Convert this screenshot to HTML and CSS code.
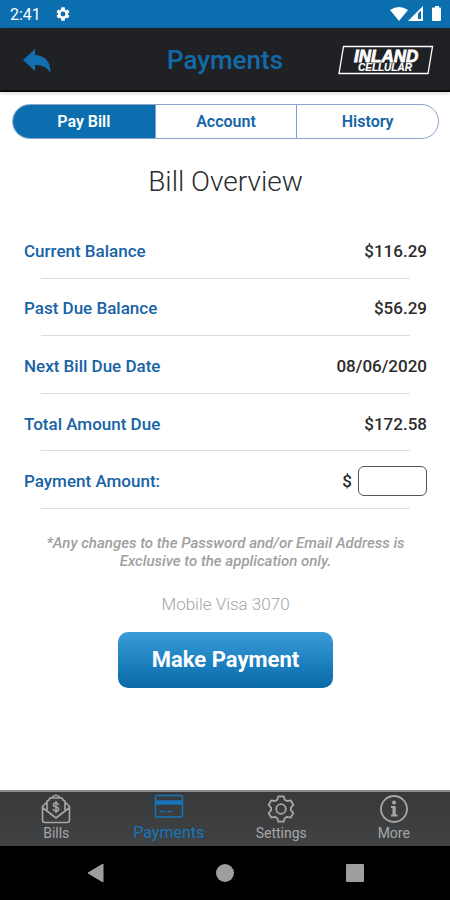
FILE: index.html
```html
<!DOCTYPE html>
<html lang="en">
<head>
<meta charset="utf-8">
<meta name="viewport" content="width=device-width, initial-scale=1">
<title>Payments</title>
<link rel="stylesheet" href="styles.css">
</head>
<body>
<div class="status">
  <div class="status-group">
    <span class="clock">2:41</span>
    <svg width="16" height="16" viewBox="0 0 24 24" fill="#fff" aria-hidden="true"><path fill-rule="evenodd" d="M19.4 13a7.600 7.600 0 0 0 0-2l2.300-1.700-2.300-4.100-2.700 1.100a8 8 0 0 0-1.700-1L14.600 2H9.400L9 5.300a8 8 0 0 0-1.700 1L4.600 5.200 2.300 9.300 4.600 11a7.600 7.600 0 0 0 0 2l-2.300 1.700 2.300 4.100 2.700-1.100a8 8 0 0 0 1.700 1l.4 3.300h5.200l.4-3.300a8 8 0 0 0 1.700-1l2.700 1.100 2.300-4.100zM12 15.600a3.600 3.600 0 1 1 0-7.200 3.600 3.600 0 0 1 0 7.200z"/></svg>
  </div>
  <svg width="52" height="18" viewBox="0 0 52 18" fill="#fff" aria-hidden="true">
    <path d="M0 5Q9-1 18 5L9 16z"/>
    <path fill-rule="evenodd" d="M33 1v15H18zM31 5.500l-3 3V14h3z"/>
    <path d="M43 2.500h2V1h4v1.500h1q1 0 1 1V15q0 1-1 1h-7q-1 0-1-1V3.500q0-1 1-1z"/>
  </svg>
</div>
<header class="header">
  <button class="back" type="button" aria-label="Back">
    <svg width="30" height="28" viewBox="0 0 30 28" fill="#1070b0" aria-hidden="true"><path d="M1 14 13 3v6C23 9.500 29 16 28.500 27 25 21 20 19 13 19v6z"/></svg>
  </button>
  <h1>Payments</h1>
  <svg class="logo" width="96" height="30" viewBox="0 0 96 30" role="img" aria-label="Inland Cellular">
    <path d="M5.500 1.500H94.500L90 28.500H1z" fill="none" stroke="#fff" stroke-width="1.300"/>
    <g fill="#fff" stroke="#fff" font-family="Liberation Sans, Arial, sans-serif" font-weight="700" font-style="italic">
      <text x="16" y="17" font-size="17" stroke-width=".8">INLAND</text>
      <text x="20" y="26" font-size="10" stroke-width=".2">CELLULAR</text>
    </g>
  </svg>
</header>
<main>
  <nav class="tabs" aria-label="Payment sections">
    <button class="tab active" type="button" aria-current="page">Pay Bill</button>
    <button class="tab" type="button">Account</button>
    <button class="tab" type="button">History</button>
  </nav>
  <h2>Bill Overview</h2>
  <form>
    <div class="rows">
      <div class="row"><span class="label">Current Balance</span><span>$116.29</span></div>
      <div class="row"><span class="label">Past Due Balance</span><span>$56.29</span></div>
      <div class="row"><span class="label">Next Bill Due Date</span><span>08/06/2020</span></div>
      <div class="row"><span class="label">Total Amount Due</span><span>$172.58</span></div>
      <div class="row"><label class="label" for="amount">Payment Amount:</label><span class="entry">$<input id="amount" type="text" inputmode="decimal"></span></div>
    </div>
    <p class="note">*Any changes to the Password and/or Email Address is Exclusive to the application only.</p>
    <p class="card">Mobile Visa 3070</p>
    <button class="pay" type="submit">Make Payment</button>
  </form>
</main>
<nav class="bottom" aria-label="Main">
  <a href="#bills">
    <svg width="30" height="30" viewBox="0 0 30 30" fill="none" stroke="currentColor" stroke-width="1.600" stroke-linejoin="round" stroke-linecap="round" aria-hidden="true"><path d="M6 8 1.500 12.500V26q0 2.500 2.500 2.500h22q2.500 0 2.500-2.500V12.500L24 8M6 17V7q2.500-.5 3-3h12q.5 2.500 3 3v10M11 3.500Q15-1 19 3.500M2 14l13 10 13-10"/><path stroke-width="1.500" d="M17.500 10.500q-.8-1.500-2.500-1.500c-3.500 0-3.500 3.500 0 4s3.500 4 0 4q-2 0-2.600-1.500M15 7.500v11"/></svg>
    <span>Bills</span>
  </a>
  <a class="current" href="#payments" aria-current="page">
    <svg width="30" height="30" viewBox="0 0 30 30" fill="none" stroke="currentColor" stroke-width="1.500" aria-hidden="true"><rect x="1.500" y="1.500" width="27" height="21.500" rx="2"/><path d="M1.500 8.500h27" stroke-width="4.500"/><path d="M5.500 17.500h6M13.500 17.500h6" stroke-dasharray="4 1"/></svg>
    <span>Payments</span>
  </a>
  <a href="#settings">
    <svg width="30" height="30" viewBox="0 0 30 30" fill="none" stroke="currentColor" stroke-width="1.800" stroke-linejoin="round" aria-hidden="true"><path d="M12.300 2.300h5.400L18.700 5.700 21.200 7.100 24.700 6.300 27.400 11 24.900 13.600V16.400L27.400 19 24.700 23.700 21.200 22.900 18.700 24.300 17.700 27.700H12.300L11.300 24.300 8.800 22.900 5.300 23.700 2.600 19 5.100 16.400V13.600L2.600 11 5.300 6.300 8.800 7.100 11.300 5.700z"/><circle cx="15" cy="15" r="4.800"/></svg>
    <span>Settings</span>
  </a>
  <a href="#more">
    <svg width="30" height="30" viewBox="0 0 30 30" fill="none" stroke="currentColor" aria-hidden="true"><circle cx="15" cy="15" r="13" stroke-width="1.800"/><circle cx="15" cy="8.500" r="2" fill="currentColor" stroke="none"/><path d="M12 13h3.500v8.500M12 21.500h6.500" stroke-width="2"/><path d="M15 13v8" stroke-width="3"/></svg>
    <span>More</span>
  </a>
</nav>
<div class="system">
  <button type="button" aria-label="System back"><svg width="20" height="22" viewBox="0 0 20 22" aria-hidden="true"><path d="M2 11 17 2v18z" fill="#9e9e9e" stroke="#9e9e9e" stroke-linejoin="round"/></svg></button>
  <button type="button" aria-label="Home"><svg width="20" height="22" viewBox="0 0 20 22" aria-hidden="true"><circle cx="10" cy="11" r="9" fill="#9e9e9e"/></svg></button>
  <button type="button" aria-label="Recent apps"><svg width="20" height="22" viewBox="0 0 20 22" aria-hidden="true"><rect x="1" y="2" width="18" height="18" rx="1" fill="#9e9e9e"/></svg></button>
</div>
</body>
</html>
```
FILE: styles.css
```css
* { box-sizing: border-box; }
body {
  margin: 0;
  min-height: 100vh;
  display: flex;
  flex-direction: column;
  background: #fff;
  color: #2b2b2d;
  font-family: Roboto, sans-serif;
  font-size: 16px;
}
h1, h2, p { margin: 0; }
button, input { font: inherit; color: inherit; }
button { border: 0; padding: 0; background: none; }
svg { display: block; }

.status {
  display: flex;
  justify-content: space-between;
  align-items: center;
  height: 28px;
  padding: 0 8px 0 10px;
  background: #0b6eae;
  color: #fff;
}
.status-group { display: flex; align-items: center; gap: 14px; }

.header {
  display: grid;
  grid-template-columns: 1fr auto 1fr;
  align-items: center;
  height: 64px;
  padding: 2px 16px 0;
  background: #202124;
  border-bottom: 2px solid #08090a;
  box-shadow: 0 1px 4px #0003;
}
.header h1 {
  color: #126aa9;
  font-size: 26px;
  font-weight: 500;
  line-height: 32px;
}
.back { justify-self: start; padding-left: 6px; }
.logo { justify-self: end; }

main { flex: 1; padding: 12px 11px 0 12px; }
.tabs {
  display: grid;
  grid-template-columns: repeat(3, 1fr);
  height: 35px;
  border: 1px solid #8ba5cd;
  border-radius: 18px;
  overflow: hidden;
}
.tab { color: #1565a7; font-weight: 600; }
.tab + .tab { border-left: 1px solid #7f9fca; }
.tab.active { background: #0b6eae; color: #fff; }

h2 {
  margin-top: 25px;
  font-size: 28px;
  font-weight: 300;
  line-height: 36px;
  text-align: center;
}
form { display: flex; flex-direction: column; align-items: center; }
.rows {
  display: grid;
  grid-auto-rows: 1fr;
  align-self: stretch;
  min-height: 288px;
  margin-top: 21px;
}
.row {
  display: flex;
  justify-content: space-between;
  align-items: center;
  padding: 2px 12px 0;
  font-size: 17px;
  font-weight: 500;
  background: linear-gradient(#dedede, #dedede) center bottom / calc(100% - 58px) 1px no-repeat;
}
.label { color: #1763a6; }
.entry { display: flex; align-items: center; gap: 6px; }
.entry input {
  width: 69px;
  height: 30px;
  padding: 0 8px;
  border: 1px solid #555;
  border-radius: 6px;
  background: #fff;
}
.note {
  max-width: 380px;
  margin-top: 25px;
  color: #a0a0a0;
  font-size: 15px;
  font-style: italic;
  font-weight: 500;
  line-height: 18px;
  text-align: center;
}
.card {
  margin-top: 22px;
  color: #a6a6a6;
  font-size: 17px;
  font-weight: 300;
  line-height: 24px;
}
.pay {
  margin: 16px 0;
  padding: 14px 34px;
  border-radius: 10px;
  background: linear-gradient(#3c9bd9, #1c80bf 55%, #0a68a8);
  color: #fff;
  font-size: 22px;
  font-weight: 700;
  line-height: 28px;
}

.bottom {
  display: grid;
  grid-template-columns: repeat(4, 1fr);
  height: 56px;
  padding-top: 2px;
  border-top: 2px solid #888b8d;
  background: linear-gradient(#37393b, #414244);
}
.bottom a {
  display: flex;
  flex-direction: column;
  align-items: center;
  color: #a5a6a7;
  font-size: 14px;
  line-height: 18px;
  text-decoration: none;
}
.bottom .current { color: #1676b8; font-size: 16px; }

.system {
  display: flex;
  justify-content: space-between;
  align-items: center;
  height: 54px;
  padding: 0 19%;
  background: #000;
}
```
